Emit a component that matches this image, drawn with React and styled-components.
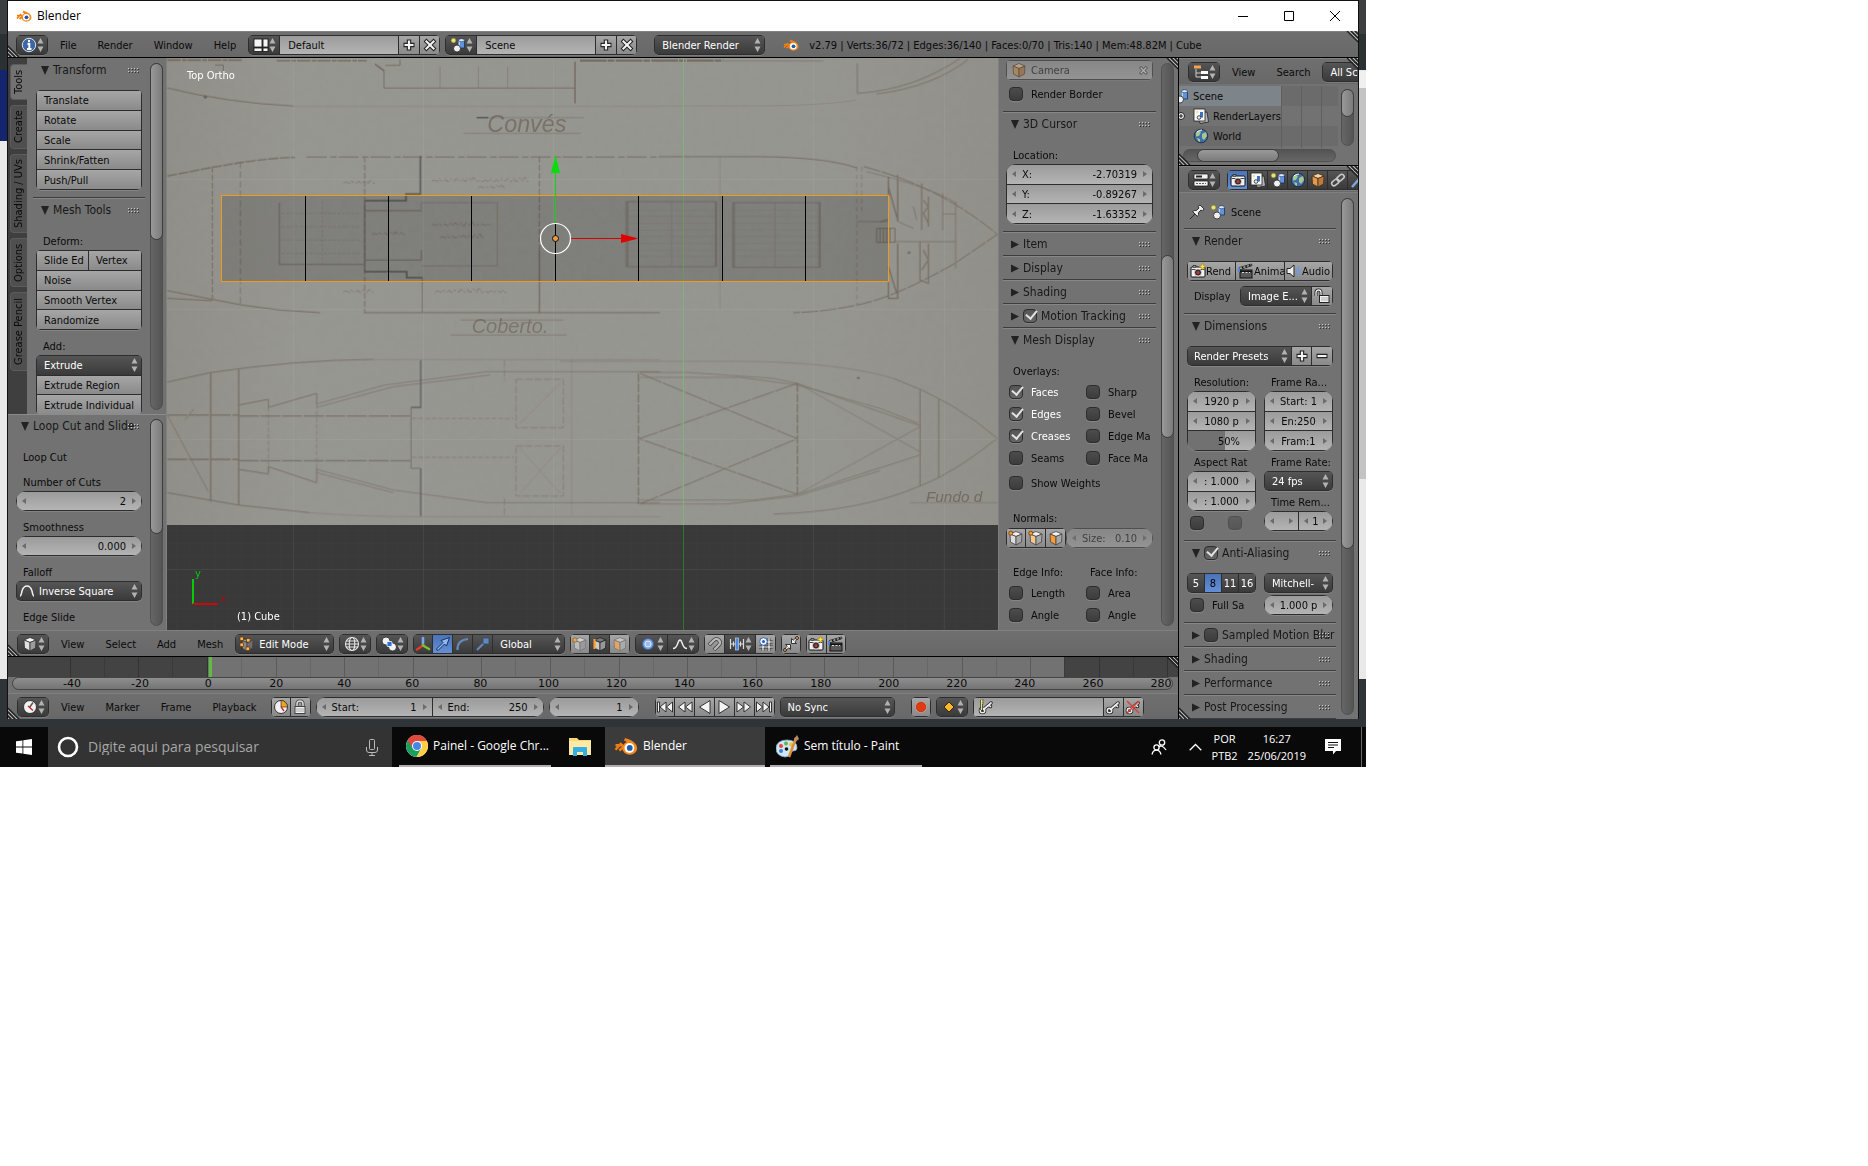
import React, { useState } from 'react';
import styled, { createGlobalStyle, css } from 'styled-components';

const uiFont = '"DejaVu Sans Condensed", "DejaVu Sans", sans-serif';
const winFont = '"Open Sans", "Noto Sans", sans-serif';
const line = '#2d2d2d';
const lightWidget = 'linear-gradient(#a6a6a6, #8a8a8a)';
const fieldWidget = 'linear-gradient(#9b9b9b, #b4b4b4)';
const darkWidget = 'linear-gradient(#555, #3a3a3a)';

const Global = createGlobalStyle`
  * { box-sizing: border-box; }
  body { margin: 0; background: #fff; font: 11px/14px ${uiFont}; color: #0a0a0a; }
  button, input, select { font: inherit; color: inherit; margin: 0; }
  button, select { border: 0; padding: 0; white-space: nowrap; }
  svg { display: block; flex: none; }
`;

/* ---------- desktop and window frame ---------- */
const Desktop = styled.div`
  width: 100%; max-width: 1366px; overflow: hidden; white-space: nowrap;
  background: linear-gradient(#3b3f42 34px, #2b3033 34px 70px, #e9e9e9 70px 679px, #2e3437 679px);
`;
const Stage = styled.div`display: flex; padding-bottom: 8px;`;
const LeftEdge = styled.div`
  flex: 0 0 7px;
  background: linear-gradient(transparent 70px, #13266d 70px 141px, transparent 141px);
`;
const RightEdge = styled.div`
  flex: 0 0 7px;
  background: linear-gradient(transparent 71px, #f0f0f0 71px 88px, #c3c3c3 88px 479px, transparent 479px);
`;
const Window = styled.main`
  flex: 1; min-width: 0; border: 1px solid #111; border-bottom: 0; background: #727272; overflow: hidden;
`;
const TitleBar = styled.header`
  height: 30px; background: #fff; display: flex; align-items: center; padding-left: 8px;
  font: 12px/16px ${winFont}; color: #000;
`;
const Caption = styled.span`flex: 1; padding-left: 5px;`;
const CaptionButton = styled.button`
  width: 46px; height: 28px; background: none; display: grid; place-items: center;
`;
const Header = styled.div`
  position: relative; display: flex; align-items: center; height: 26px;
  padding: ${p => p.$pad || '2px 0 0 9px'};
  background: linear-gradient(#808080 1px, #6f6f6f 1px, #686868);
  overflow: hidden; flex: none;
`;
const Cluster = styled.div`
  display: flex; align-items: center; gap: ${p => p.$gap ?? 5}px; margin-left: ${p => p.$ml || 0}px;
`;
const Menus = styled.nav`display: flex; gap: 21px; margin: 0 ${p => p.$mr || 12}px 0 12px;`;
const MenuItem = styled.button`background: none; padding-top: 2px;`;
const Workspace = styled.div`display: flex; border-top: 1px solid #000;`;
const MainColumn = styled.div`flex: 1; min-width: 0; border-right: 1px solid #000;`;
const SideColumn = styled.div`flex: 0 0 179px; min-width: 0; display: flex; flex-direction: column; overflow: hidden;`;
const ViewRow = styled.div`display: flex;`;

const GripSvg = styled.svg`
  position: absolute; z-index: 3; pointer-events: none;
  ${p => (p.$at === 'bl' ? css`left: 0; bottom: 0;` : css`right: 0; top: 0;`)}
`;
const Grip = ({ at }) => (
  <GripSvg $at={at} width="12" height="12" aria-hidden="true">
    <path d="M0 1L11 12M0 5L7 12M0 9L3 12" stroke="#222" strokeWidth="1.3" transform={at === 'tr' ? 'rotate(180 6 6)' : undefined} />
    <path d="M0 3L9 12M0 7L5 12M0 11L1 12" stroke="#b5b5b5" strokeWidth="1" transform={at === 'tr' ? 'rotate(180 6 6)' : undefined} />
  </GripSvg>
);

/* ---------- widgets ---------- */
const Group = styled.div`
  display: grid; gap: 1px; padding: 1px; background: ${line}; overflow: hidden; flex: none;
  border-radius: ${p => (p.$round ? 10 : 5)}px;
  height: ${p => (p.$rows || 1) * 20}px;
  width: ${p => (p.$w ? p.$w + 'px' : 'auto')};
  grid-template-columns: ${p => p.$cols || 'minmax(0, 1fr)'};
  grid-auto-rows: minmax(0, 1fr);
  box-shadow: 0 1px rgba(255, 255, 255, .13);
  opacity: ${p => (p.$off ? .5 : 1)};
`;
const Split = styled.div`display: grid; grid-template-columns: ${p => p.$cols}; gap: 1px; min-width: 0;`;
const Button = styled.button`
  display: flex; align-items: center; overflow: hidden; min-width: 0;
  justify-content: ${p => (p.$center ? 'center' : 'flex-start')};
  padding: ${p => (p.$icon ? 0 : 2)}px 0 0 ${p => (p.$center ? 0 : p.$pl ?? 7)}px;
  background: ${p => (p.$on ? 'linear-gradient(#4a73b8, #648fd6)' : p.$dark ? darkWidget : lightWidget)};
  color: ${p => (p.$on ? '#000' : p.$dark ? '#fff' : '#0a0a0a')};
`;
const IconMenu = styled.button`
  display: flex; align-items: center; justify-content: space-between; padding: 0 3px 0 4px;
  background: ${darkWidget}; min-width: 0;
`;
const SelectWrap = styled.label`
  display: flex; align-items: center; min-width: 0; background: ${darkWidget}; color: #fff;
  padding: 0 3px 0 ${p => p.$pl ?? 7}px; gap: 4px;
`;
const SelectBox = styled.select`
  appearance: none; background: none; flex: 1; min-width: 0; width: 0; height: 18px; padding-top: 2px; outline: none; color: #fff;
  overflow: hidden;
`;
const TextBox = styled.input`
  border: 0; outline: none; min-width: 0; width: 100%; padding: 2px 8px 0; background: ${fieldWidget};
`;
const NumWrap = styled.label`
  display: flex; align-items: center; min-width: 0; overflow: hidden; gap: ${p => (p.$tight ? 2 : 6)}px;
  padding: 0 ${p => (p.$fill ? 9 : 5)}px 0 5px;
  background: ${p => (p.$fill ? `linear-gradient(90deg, #717171 ${p.$fill}%, transparent ${p.$fill}%), ` : '')}${fieldWidget};
`;
const NumLabel = styled.span`padding-top: 2px;`;
const NumValue = styled.input`
  border: 0; outline: none; background: none; padding: 2px 0 0; flex: 1; min-width: 0; width: 0;
  text-align: ${p => (p.$center ? 'center' : 'right')};
`;
const Check = styled.input`
  appearance: none; width: 14px; height: 14px; border: 1px solid ${line}; border-radius: 4px; flex: none;
  background: linear-gradient(#4c4c4c, #3c3c3c); display: grid; place-items: center;
  box-shadow: 0 1px rgba(255, 255, 255, .13); opacity: ${p => (p.$off ? .5 : 1)};
  &:checked { background: linear-gradient(#555, #666); }
  &:checked::after {
    content: ''; width: 5px; height: 9px; margin: -5px 0 0 2px; transform: rotate(40deg);
    border: solid #e4e4e4; border-width: 0 2px 2px 0;
  }
`;
const CheckRow = styled.label`
  display: flex; align-items: center; gap: 8px; height: ${p => p.$h || 22}px; padding-left: 3px; min-width: 0; overflow: hidden;
  color: ${p => (p.$lit ? '#fff' : 'inherit')};
`;
const CheckText = styled.span`padding-top: 2px;`;
const Label = styled.div`height: 19px; line-height: 22px; padding-left: 7px; margin-top: ${p => p.$mt ?? 6}px; overflow: hidden;`;
const Gap = styled.div`height: ${p => p.$h || 0}px;`;
const TwoCols = styled.div`display: grid; grid-template-columns: minmax(0, 1fr) minmax(0, 1fr); column-gap: ${p => p.$gap ?? 8}px;`;

const Arrows = () => (
  <svg width="7" height="14" viewBox="0 0 7 14" aria-hidden="true">
    <path d="M3.500 0L6.500 5.500H.5ZM3.500 14L6.500 8.500H.5Z" fill="#b2b2b2" />
  </svg>
);
const Tri = ({ right }) => (
  <svg width="4" height="6" viewBox="0 0 4 6" aria-hidden="true">
    <path d={right ? 'M0 0L4 3L0 6Z' : 'M4 0L0 3L4 6Z'} fill="#6b6b6b" />
  </svg>
);
const Select = ({ value, label, pl, icon }) => (
  <SelectWrap $pl={pl}>
    {icon}
    <SelectBox aria-label={label}><option>{value}</option></SelectBox>
    <Arrows />
  </SelectWrap>
);
const Num = ({ label, value, fill, center, tight, name }) => {
  const [v, setV] = useState(value);
  return (
    <NumWrap $fill={fill} $tight={tight}>
      {!fill && <Tri />}
      {label && <NumLabel>{label}</NumLabel>}
      <NumValue aria-label={name || label} $center={center} value={v} onChange={e => setV(e.target.value)} />
      {fill ? <Gap /> : <Tri right />}
    </NumWrap>
  );
};
const Tick = ({ label, on, h, off }) => (
  <CheckRow $h={h} $lit={on}><Check type="checkbox" defaultChecked={on} $off={off} />{label && <CheckText>{label}</CheckText>}</CheckRow>
);

/* ---------- panels ---------- */
const PanelBox = styled.section`
  padding: 0; border-top: ${p => (p.$first ? 0 : 1)}px solid #3d3d3d;
  box-shadow: ${p => (p.$first ? 'none' : 'inset 0 1px #878787')};
`;
const PanelHead = styled.h2`
  margin: 0; display: flex; align-items: center; gap: 4px; height: ${p => (p.$first ? 22 : 23)}px;
  padding: ${p => (p.$first ? 0 : 1)}px 6px 0 ${p => p.$pl}px; font: 12px/16px ${uiFont}; color: #181818;
`;
const PanelTitle = styled.span`flex: 1; width: 0; white-space: nowrap;`;
const PanelBody = styled.div`padding: ${p => p.$pt ?? 10}px 3px ${p => p.$pb ?? 7}px;`;
const Dots = () => (
  <svg width="11" height="5" aria-hidden="true">
    {[0, 3, 6, 9].map(x => [0, 3].map(y => <rect key={x + '-' + y} x={x} y={y} width="1" height="1" fill="#c9c9c9" />))}
    {[0, 3, 6, 9].map(x => [1, 4].map(y => <rect key={x + '-' + y} x={x + 1} y={y} width="1" height="1" fill="#333" />))}
  </svg>
);
const Panel = ({ title, open, first, pt, pb, pl = 8, check, children }) => (
  <PanelBox $first={first}>
    <PanelHead $first={first} $pl={pl}>
      <svg width="8" height="9" aria-hidden="true"><path d={open ? 'M0 0H8L4 9Z' : 'M0 .5V8.500L8 4.500Z'} fill="#222" /></svg>
      {check !== undefined && <Check type="checkbox" aria-label={title} defaultChecked={check} />}
      <PanelTitle>{title}</PanelTitle>
      <Dots />
    </PanelHead>
    {open && children && <PanelBody $pt={pt} $pb={pb}>{children}</PanelBody>}
  </PanelBox>
);

const Track = styled.div`
  background: linear-gradient(${p => (p.$flat ? '0deg' : '90deg')}, #666, #545454); border: 1px solid #505050; border-radius: 7px;
  display: flex; flex-direction: ${p => (p.$flat ? 'row' : 'column')}; flex: none;
  ${p => (p.$flat ? css`height: 13px;` : css`width: 13px;`)}
  margin: ${p => p.$m || '5px 4px 4px 3px'};
`;
const Thumb = styled.div`
  border: 1px solid #3c3c3c; border-radius: 7px; margin: ${p => (p.$at ? p.$at : '-1px')};
  background: linear-gradient(${p => (p.$flat ? '180deg' : '90deg')}, #999, #7b7b7b);
  flex: 0 0 ${p => p.$len}px;
`;

/* ---------- icons, 16 x 16 ---------- */
const cube = (top, left, right, edge) => (
  <g stroke={edge} strokeWidth=".8" strokeLinejoin="round">
    <path d="M8 1.500L14 4L8 6.500L2 4Z" fill={top} /><path d="M2 4L8 6.500V15L2.500 12Z" fill={left} /><path d="M14 4L8 6.500V15L13.500 12Z" fill={right} />
  </g>
);
const star = (x, y) => <path transform={`translate(${x} ${y})`} d="M0 -3.500L1 -1L3.500 0L1 1L0 3.500L-1 1L-3.500 0L-1 -1Z" fill="#ffe44a" stroke="#a58a10" strokeWidth=".6" />;
const scene = (
  <g><circle cx="3.500" cy="3.500" r="2.300" fill="#e9e56a" stroke="#8f8c3a" strokeWidth=".6" />
    <path d="M8.500 3.500V11H14.500V3.500Z" fill="#5f94df" stroke="#1d2f55" strokeWidth=".8" /><path d="M8.500 4V11H10V4Z" fill="#b9d5fb" />
    <ellipse cx="11.500" cy="3.200" rx="3" ry="1.500" fill="#dce9fb" stroke="#1d2f55" strokeWidth=".6" />
    <circle cx="7" cy="11.500" r="3.500" fill="#f0f0f0" stroke="#222" strokeWidth=".8" /></g>
);
const world = (
  <g><circle cx="8" cy="8" r="6.800" fill="#3f6ea8" stroke="#1b2b40" strokeWidth=".9" /><path d="M3 4.500Q6 2 8 4L6 8L3 8.500ZM9 6L13 4L14 8L11 12L9 10ZM4 10L7 11L7 14Q4.500 13 4 10Z" fill="#a8c890" />
    <path d="M4 4Q6 2 9 2" stroke="#fff" strokeWidth="1" fill="none" /></g>
);
const camera = (
  <g><rect x="1" y="4" width="14" height="10" rx="1" fill="#f2f2f2" stroke="#111" /><path d="M3 2.500H6V4H3Z" fill="#ddd" stroke="#111" strokeWidth=".7" /><path d="M1.500 6.500H14.500" stroke="#444" />
    <circle cx="8" cy="9.500" r="3.600" fill="#333" stroke="#eee" strokeWidth=".8" /><circle cx="8" cy="9.500" r="1.500" fill="#c33" /></g>
);
const clapper = (
  <g><rect x="2" y="7" width="12" height="8" fill="#5a5a5a" stroke="#111" /><path d="M2 6.500L14 2.500L13.500 1L1.500 4.500Z" fill="#eee" stroke="#111" strokeWidth=".8" /><path d="M4 4L5.500 5.500M7.500 3L9 4.400M11 2L12.500 3.300M2 8.500H14" stroke="#111" strokeWidth="1.300" /><path d="M4 9.500H12" stroke="#ddd" strokeDasharray="2 1.500" /><path d="M1 5V9" stroke="#4a86d8" strokeWidth="2" /></g>
);
const keyShape = <g fill="none" strokeLinecap="round"><path d="M5.500 10.500L13 4M11 6L12.500 7.500" stroke="#222" strokeWidth="3.500" /><circle cx="4.500" cy="11.500" r="2.300" stroke="#222" strokeWidth="3" /><path d="M5.500 10.500L13 4M11 6L12.500 7.500" stroke="#eee" strokeWidth="1.700" /><circle cx="4.500" cy="11.500" r="2.300" stroke="#eee" strokeWidth="1.400" /></g>;
const bar = x => <rect x={x} y="3" width="2" height="10" />;
const transport = kids => <g fill="#f4f4f4" stroke="#222" strokeWidth=".9" strokeLinejoin="round">{kids}</g>;

const glyphs = {
  blender: <g><path d="M1 7.500H6M3.500 11L10 5.500L7 3.500M5 6L1 10.500" stroke="#f07d12" strokeWidth="1.700" fill="none" /><path d="M7 2.500Q15.500 5 15.500 9.500A5 4.500 0 1 1 5.500 9Q6 6 9.500 5Z" fill="#f5871f" /><circle cx="10.300" cy="9.300" r="3.300" fill="#fff" /><circle cx="10.500" cy="9.300" r="1.900" fill="#1f5ba7" /></g>,
  info: <g><circle cx="8" cy="8" r="6.700" fill="#3d66a5" stroke="#d7e2f2" strokeWidth="1" /><path d="M8 3V5.200M6.500 7H8.300V12M6 12H10.500" stroke="#fff" strokeWidth="2" fill="none" /></g>,
  layout: <g fill="#f5f5f5" stroke="#111" strokeWidth=".8"><rect x="1" y="2" width="8" height="8" /><rect x="1" y="11" width="8" height="3.500" /><rect x="10" y="2" width="5" height="8" /><rect x="10" y="11" width="5" height="3.500" /></g>,
  scene, world, camera, clapper,
  plus: <g><path d="M8 2.500V13.500M2.500 8H13.500" stroke="#222" strokeWidth="4.400" /><path d="M8 3.500V12.500M3.500 8H12.500" stroke="#f4f4f4" strokeWidth="2.200" /></g>,
  minus: <g><path d="M2.500 8H13.500" stroke="#222" strokeWidth="4.400" /><path d="M3.500 8H12.500" stroke="#f4f4f4" strokeWidth="2.200" /></g>,
  cross: <g><path d="M3 3L13 13M13 3L3 13" stroke="#222" strokeWidth="4" /><path d="M3.700 3.700L12.300 12.300M12.300 3.700L3.700 12.300" stroke="#f4f4f4" strokeWidth="2" /></g>,
  object: cube('#f7d3a4', '#dd9a55', '#bd7a3c', '#4a2f14'),
  whiteCube: cube('#fafafa', '#e2e2e2', '#9c9c9c', '#333'),
  vertexCube: <g>{cube('#cfcfcf', '#bdbdbd', '#9a9a9a', '#777')}<circle cx="3" cy="4" r="2.200" fill="#e8a45c" stroke="#7a4a15" strokeWidth=".6" /></g>,
  edgeCube: <g>{cube('#777', '#ccc', '#999', '#222')}<path d="M2.500 3V13" stroke="#ff9a2e" strokeWidth="2.200" /></g>,
  faceCube: <g>{cube('#c5c5c5', '#e2a569', '#aaa', '#777')}</g>,
  normVert: <g>{cube('#f0f0f0', '#ddd', '#a8a8a8', '#444')}<circle cx="2.800" cy="3.200" r="2" fill="#f79a35" stroke="#6b3a08" strokeWidth=".8" /></g>,
  normSplit: <g>{cube('#f0f0f0', '#f5c88f', '#a8a8a8', '#444')}<circle cx="2.800" cy="3.200" r="2" fill="#f79a35" stroke="#6b3a08" strokeWidth=".8" /></g>,
  normFace: cube('#f0f0f0', '#f79a35', '#a8a8a8', '#444'),
  outliner: <g fill="#fff"><path d="M3 5V13H8M3 9H8" stroke="#ccc" fill="none" /><rect x="1" y="1.500" width="7" height="3" fill="#f3a351" /><rect x="8" y="7" width="7" height="3" /><rect x="8" y="12" width="7" height="3" /></g>,
  layers: <g stroke="#222" strokeWidth=".8"><path d="M5 5L14 4L15.500 14L7 15.500Z" fill="#b5b5b5" /><rect x="1" y="1" width="11" height="12" fill="#f7f7f7" /><path d="M8.500 4V9.500" stroke="#3f72bd" strokeWidth="3" /><circle cx="6" cy="9.500" r="1.800" fill="#eee" /><circle cx="4" cy="4" r="1" fill="#e9e56a" stroke="none" /></g>,
  props: <g fill="#f2f2f2" stroke="#111" strokeWidth=".7"><rect x="1" y="2" width="14" height="5" rx="1" /><path d="M3 4.500H9" stroke="#222" strokeWidth="2" /><rect x="1" y="9" width="14" height="5" rx="1" /><path d="M3 11.500H13" stroke="#222" strokeDasharray="2 1" /></g>,
  link: <g fill="none" stroke="#c8c8c8" strokeWidth="1.600"><rect x="1.500" y="8" width="8" height="4.600" rx="2.300" transform="rotate(-40 5.500 10.500)" /><rect x="6.500" y="3.500" width="8" height="4.600" rx="2.300" transform="rotate(-40 10.500 5.800)" /></g>,
  wrench: <path d="M2 15L11 5Q10 2 13 1" stroke="#7da6dc" strokeWidth="2.400" fill="none" />,
  pin: <path d="M1 15L6 10L3.500 7.500Q5.500 6 7.500 6.500L10 4L9 2.500L11 1L15 5L13.500 7L12 6L9.500 8.500Q10 10.500 8.500 12.500L6 10" fill="#eee" stroke="#222" strokeWidth=".9" strokeLinejoin="round" />,
  speaker: <g><path d="M1 5.500H4L8 2V14L4 10.500H1Z" fill="#eee" stroke="#222" /><path d="M10 5Q12 8 10 11M12 3.500Q15 8 12 12.500" stroke="#6f9be0" strokeWidth="1.400" fill="none" /></g>,
  unlock: <g><path d="M2 8V4.500Q2 2 4.500 2T7 4.500V7" stroke="#222" strokeWidth="3" fill="none" /><path d="M2 8V4.500Q2 2 4.500 2T7 4.500V7" stroke="#eee" strokeWidth="1.300" fill="none" /><rect x="5.500" y="7.500" width="9.500" height="7" fill="#f2f2f2" stroke="#222" /><path d="M7 10H14M7 12H14" stroke="#aaa" /></g>,
  lock: <g><path d="M5 8V5Q5 2 8 2T11 5V8" stroke="#444" strokeWidth="3.200" fill="none" /><path d="M5 8V5Q5 2 8 2T11 5V8" stroke="#ddd" strokeWidth="1.500" fill="none" /><rect x="3" y="7.500" width="10" height="7" fill="#eee" stroke="#444" /><path d="M4 10H12M4 12H12" stroke="#aaa" /></g>,
  invSquare: <path d="M1 13Q2 13 3 8Q4.500 3 8 3T13 8Q14 13 15 13" stroke="#f2f2f2" strokeWidth="1.500" fill="none" />,
  smooth: <path d="M1 12.500Q4 12.500 5.500 8Q8 0 10.500 8Q12 12.500 15 12.500" stroke="#eee" strokeWidth="1.400" fill="none" />,
  editMode: <g>{cube('#999', '#8a8a8a', '#6f6f6f', '#444')}<path d="M3 2.500V13.500M3 3H9" stroke="#222" /><g fill="#ffb35c" stroke="#5e3205" strokeWidth=".7"><rect x="1" y="1" width="3.500" height="3.500" /><rect x="1" y="7" width="3.500" height="3.500" /><rect x="7.500" y="2.500" width="3.500" height="3.500" /><rect x="7" y="11" width="3.500" height="3.500" /></g></g>,
  shading: <g fill="none" stroke="#e8e8e8" strokeWidth="1.100"><circle cx="8" cy="8" r="6.500" fill="#444" /><ellipse cx="8" cy="8" rx="2.800" ry="6.500" /><path d="M1.500 8H14.500M2.500 5H13.500M2.500 11H13.500" /></g>,
  pivot: <g stroke="#222" strokeWidth=".8"><circle cx="5" cy="5" r="4" fill="#f2f2f2" /><circle cx="11.500" cy="11" r="4" fill="#f2f2f2" /><rect x="6" y="5.500" width="5" height="5" rx="1" fill="#2f6fd0" stroke="#fff" /></g>,
  axes: <g strokeWidth="2.600" strokeLinecap="round" fill="none"><path d="M8 9V2" stroke="#78a8ee" /><path d="M8 9.500L2 13.500" stroke="#e2372b" /><path d="M8 9.500L14 13" stroke="#7ac22b" /></g>,
  move: <path d="M2 14L1.500 13L8 6.500L6 4.500L14.500 1.500L11.500 10L9.500 8L3 14.500Z" fill="#8fb8f2" stroke="#16305a" strokeWidth="1" />,
  arc: <path d="M2.500 14Q2 4 13 3" stroke="#6288bb" strokeWidth="2.200" fill="none" />,
  scale: <g><path d="M2 14L9 7" stroke="#6288bb" strokeWidth="2.200" /><rect x="8" y="2" width="6" height="6" fill="#6288bb" stroke="#2b4468" strokeWidth=".7" /></g>,
  prop: <g><circle cx="8" cy="8" r="5.500" fill="#7fa6e2" stroke="#3c62a0" /><circle cx="8" cy="8" r="3" fill="#9bbcf0" stroke="#dce8fa" strokeWidth="1" /></g>,
  magnet: <g fill="none" transform="rotate(45 8 8)"><path d="M4.500 13V6Q4.500 2.500 8 2.500T11.500 6V13" stroke="#444" strokeWidth="3.800" /><path d="M4.500 12.500V6Q4.500 2.500 8 2.500T11.500 6V12.500" stroke="#b9b9b9" strokeWidth="2.200" /></g>,
  increment: <g><path d="M1 8H15M1.500 3V13M4.500 5.500V10.500M11.500 5.500V10.500M14.500 3V13" stroke="#ddd" strokeWidth="1.200" /><rect x="6.500" y="2" width="3" height="12" fill="#4d88df" stroke="#cfe0f7" strokeWidth=".6" /></g>,
  target: <g><path d="M1 11H15M5 4V15M11 2V15M6 6H15" stroke="#333" strokeWidth="2.800" /><path d="M1 11H15M5 4V15M11 2V15M6 6H15" stroke="#fff" strokeWidth="1.200" /><circle cx="5.500" cy="5.500" r="3.800" fill="#f2f6fc" stroke="#2f66b8" strokeWidth="1" /><circle cx="5.500" cy="5.500" r="1.600" fill="#2f66b8" /></g>,
  pack: <g fill="#f5f5f5" stroke="#222" strokeWidth=".9"><path d="M8.500 7.500V2.500L10.300 4.200L13 1.500L14.500 3L11.800 5.700L13.500 7.500Z" /><path d="M7.500 8.500V13.500L5.700 11.800L3 14.500L1.500 13L4.200 10.300L2.500 8.500Z" /><circle cx="14" cy="2" r="1.500" fill="#f5a14a" /><circle cx="2" cy="14" r="1.500" fill="#f5a14a" /></g>,
  renderNew: <g>{camera}{star(12.5, 3.5)}</g>,
  clock: <g><circle cx="8" cy="8" r="6.500" fill="#f2f2f2" stroke="#333" /><path d="M7.500 8.500L11 3.500" stroke="#555" strokeWidth="1.400" /><path d="M6 7L11 11.500" stroke="#c22" strokeWidth="1.300" /></g>,
  clockRange: <g><circle cx="8" cy="8" r="6.500" fill="#f2f2f2" stroke="#333" /><path d="M8 8V1.500A6.500 6.500 0 0 1 14.500 8Z" fill="#f3a21e" stroke="#333" strokeWidth=".7" /><path d="M8 8L11 12" stroke="#c22" strokeWidth="1.300" /></g>,
  first: transport(<>{bar(0.5)}<path d="M9 3V13L3 8ZM15.500 3V13L9.500 8Z" /></>),
  rewind: transport(<path d="M8 3V13L1.500 8ZM15 3V13L8.500 8Z" />),
  back: transport(<path d="M13 1.500V14.500L2.500 8Z" />),
  play: transport(<path d="M3 1.500V14.500L13.500 8Z" />),
  forward: transport(<path d="M8 3V13L14.500 8ZM1 3V13L7.500 8Z" />),
  last: transport(<><path d="M.5 3V13L6.500 8ZM7 3V13L13 8Z" />{bar(13.5)}</>),
  record: <g><circle cx="8" cy="8" r="5.600" fill="#f3b3a2" /><circle cx="8" cy="8" r="4.800" fill="#e23a10" stroke="#a12508" strokeWidth=".7" /></g>,
  diamond: <path d="M8 3L13 8L8 13L3 8Z" fill="#ffb92e" stroke="#3a2600" strokeWidth="1" />,
  key: keyShape,
  keyOff: <g>{keyShape}<path d="M2 2L14 14M14 2L2 14" stroke="#d8453b" strokeWidth="1.600" /></g>,
  keySet: <g>{keyShape}<path d="M3.500 1V11M3.500 2H6M3.500 4H5.500" stroke="#333" strokeWidth="2.600" /><path d="M3.500 1V11M3.500 2H6M3.500 4H5.500" stroke="#efe37a" strokeWidth="1.200" /></g>,
};
const Icon = ({ name, size = 16 }) => <svg width={size} height={size} viewBox="0 0 16 16" aria-hidden="true">{glyphs[name]}</svg>;
const IconButton = ({ name, label, ...rest }) => <Button $center $icon aria-label={label || name} {...rest}><Icon name={name} /></Button>;
const TypeMenu = ({ name, label }) => (
  <Group $w={32}><IconMenu aria-label={label}><Icon name={name} /><Arrows /></IconMenu></Group>
);

/* ---------- info header ---------- */
const DataBlock = ({ icon, value, label }) => (
  <Group $w={192} $cols="30px minmax(0, 1fr) 20px 19px">
    <IconMenu aria-label={`Browse ${label}`}><Icon name={icon} /><Arrows /></IconMenu>
    <TextBox aria-label={label} defaultValue={value} />
    <IconButton name="plus" label={`Add ${label}`} />
    <IconButton name="cross" label={`Delete ${label}`} />
  </Group>
);
const Stats = styled.span`margin-left: 10px; padding-top: 2px;`;
const InfoHeader = () => (
  <Header $pad="2px 0 0 8px">
    <Grip at="bl" /><Grip at="tr" />
    <TypeMenu name="info" label="Editor type" />
    <Menus>{['File', 'Render', 'Window', 'Help'].map(m => <MenuItem key={m}>{m}</MenuItem>)}</Menus>
    <Cluster>
      <DataBlock icon="layout" value="Default" label="Screen layout" />
      <DataBlock icon="scene" value="Scene" label="Scene" />
    </Cluster>
    <Cluster $ml={17} $gap={18}>
      <Group $w={111}><Select value="Blender Render" label="Render engine" /></Group>
      <Icon name="blender" />
    </Cluster>
    <Stats>v2.79 | Verts:36/72 | Edges:36/140 | Faces:0/70 | Tris:140 | Mem:48.82M | Cube</Stats>
  </Header>
);

/* ---------- tool shelf ---------- */
const Shelf = styled.aside`flex: 0 0 159px; min-width: 0; display: flex; flex-direction: column; border-right: 1px solid #808080;`;
const ToolRegion = styled.div`flex: 0 0 356px; display: flex; overflow: hidden;`;
const OperatorRegion = styled.div`flex: 1; display: flex; border-top: 1px solid #8b8b8b;`;
const TabStrip = styled.div`
  flex: 0 0 19px; background: #3f3f3f; padding: 6px 0 0 2px; display: flex; flex-direction: column; gap: 5px;
`;
const ShelfTab = styled.button`
  writing-mode: vertical-rl; transform: rotate(180deg); height: ${p => p.$h}px; width: 17px; flex: none;
  border-radius: 0 4px 4px 0; border: 1px solid #5c5c5c; border-left: 0; text-align: center;
  background: ${p => (p.$on ? '#727272' : '#4f4f4f')};
`;
const ShelfPanels = styled.div`flex: 1; min-width: 0; padding: ${p => p.$pt}px 1px 0 ${p => p.$pl}px;`;
const ToolShelf = () => (
  <Shelf>
    <ToolRegion>
      <TabStrip>
        <ShelfTab $on $h={36}>Tools</ShelfTab>
        <ShelfTab $h={44}>Create</ShelfTab>
        <ShelfTab $h={79}>Shading / UVs</ShelfTab>
        <ShelfTab $h={49}>Options</ShelfTab>
        <ShelfTab $h={79}>Grease Pencil</ShelfTab>
      </TabStrip>
      <ShelfPanels $pt={1} $pl={6}>
        <Panel title="Transform" open first pt={9}>
          <Group $rows={5}>
            {['Translate', 'Rotate', 'Scale', 'Shrink/Fatten', 'Push/Pull'].map(t => <Button key={t}>{t}</Button>)}
          </Group>
        </Panel>
        <Panel title="Mesh Tools" open>
          <Label $mt={0}>Deform:</Label>
          <Group $rows={4}>
            <Split $cols="51px minmax(0, 1fr)"><Button>Slide Ed</Button><Button>Vertex</Button></Split>
            {['Noise', 'Smooth Vertex', 'Randomize'].map(t => <Button key={t}>{t}</Button>)}
          </Group>
          <Label>Add:</Label>
          <Group $rows={3}>
            <Select value="Extrude" label="Extrude" />
            <Button>Extrude Region</Button>
            <Button>Extrude Individual</Button>
          </Group>
        </Panel>
      </ShelfPanels>
      <Track $m="5px 3px 4px 4px"><Thumb $len={177} /></Track>
    </ToolRegion>
    <OperatorRegion>
      <ShelfPanels $pt={0} $pl={5}>
        <Panel title="Loop Cut and Slide" open first pb={4}>
          <Label $mt={0}>Loop Cut</Label>
          <Label>Number of Cuts</Label>
          <Group $round><Num name="Number of Cuts" value="2" /></Group>
          <Label>Smoothness</Label>
          <Group $round><Num name="Smoothness" value="0.000" /></Group>
          <Label>Falloff</Label>
          <Group><Select value="Inverse Square" label="Falloff" pl={2} icon={<Icon name="invSquare" />} /></Group>
          <Label>Edge Slide</Label>
        </Panel>
      </ShelfPanels>
      <Track $m="4px 3px 4px 4px"><Thumb $len={115} /></Track>
    </OperatorRegion>
  </Shelf>
);

/* ---------- 3D viewport ---------- */
const Viewport = styled.div`
  flex: 1; min-width: 0; position: relative; overflow: hidden; background: #393939;
`;
const Scene3D = styled.svg`position: absolute; left: 0; top: 0;`;
const majors = [293, 423, 553, 813, 944];
const cuts = [305, 388, 471, 555, 638, 722, 805];
const squiggle = (x, y, w, n = 12) => {
  let d = `M${x} ${y}`;
  for (let i = 1; i <= n; i++) {
    const k = (i + (i % 2)) * 5 % 9;
    d += `q${(i % 3) * 4} ${(i % 2 ? -1 : 1) * (4 + k)} ${w / n} ${(i % 2 ? -1 : 1) * (3 + k)}`;
  }
  return d;
};
const Blueprint = () => (
  <g fill="none" stroke="#574535" strokeWidth="3">
    <g transform="translate(160 50) scale(.33333)">
      <g opacity=".5">
        <path strokeWidth="5" d="M22 30H245M350 32H620M645 42L672 62" strokeDasharray="40 4 14 3" />
        <path d="M672 60V114H1245M1245 35V160M720 28V46H676M165 45H190V75" />
        <path opacity=".5" d="M840 50V114M955 50V114M1043 50V114" />
        <path d="M22 114Q200 158 400 168" /><path opacity=".3" d="M400 169H1500" />
        <circle cx="136" cy="141" r="4" fill="#222" />
        <path d="M950 203H985" stroke="#222" strokeWidth="5" /><path opacity=".6" d="M985 203H1272M910 250H1262M872 855H1220M902 810H1210" />
      </g>
      <g opacity=".5">
        <path d="M22 378L157 352L240 338Q330 324 405 322" strokeDasharray="30 4" strokeWidth="4" />
        <path strokeDasharray="60 10 20 6" d="M440 321H1500" />
        <path d="M157 350V748M614 320V790M1138 320V600" strokeDasharray="18 6" /><path d="M1138 600V790" strokeWidth="4" />
        <path opacity=".7" d="M241 335V765" strokeDasharray="20 9" />
        <path stroke="#222" strokeWidth="5" d="M781 318V432H738V452H614M614 665H740V683H787" />
        <path d="M614 482H784M614 630H784V600M787 683V788M614 788H1500" />
        <path opacity=".5" d="M784 482V458H1012V648H787" />
        <path d="M614 455V665" stroke="#333" />
        <path d="M610 643H358V458" strokeWidth="4" opacity=".7" /><path opacity=".35" d="M487 455V643M365 490H600M365 530H600M365 570H600M365 610H600" strokeDasharray="8 6" />
        <path d="M22 722L157 748L245 765Q360 784 480 788M22 745L157 752" />
      </g>
      <g opacity=".4" strokeWidth="2.500" strokeDasharray="22 5 9 6">
        <path d={squiggle(550, 400, 95, 10)} /><path d={squiggle(815, 394, 290, 34)} /><path d={squiggle(955, 414, 80, 10)} />
        <path d={squiggle(635, 554, 100, 12)} /><path d={squiggle(815, 527, 180, 22)} /><path d={squiggle(840, 564, 130, 16)} />
        <path d={squiggle(550, 727, 90, 10)} /><path d={squiggle(825, 727, 215, 24)} />
      </g>
      <g opacity=".45">
        <path d="M22 996L150 968Q400 930 640 928" /><path opacity=".4" d="M640 929H1500M450 1388Q600 1400 780 1400H1500" />
        <path d="M22 1328L235 1365L450 1388" /><path d="M152 968V1355M236 958V1365" strokeWidth="4" />
        <path d="M236 1065L325 1048V1072L470 1030V1062M236 1258L325 1272V1250L470 1298V1255" />
        <path d="M470 1062L670 1006L980 965H1500M470 1072L700 1010L990 975M470 1258L700 1320L980 1358H1500M470 1268L700 1328" opacity=".7" />
        <path d="M22 1095H236M236 1098H755M22 1228H236M236 1232H755" strokeWidth="4" strokeDasharray="60 5" />
        <path opacity=".6" d="M755 1105H1060M755 1222H1060M325 1072V1270M470 1062V1255" strokeDasharray="14 6" />
        <path d="M782 930V1072H753M782 1255V1398" stroke="#222" strokeWidth="4" /><path d="M753 1072V1255H782" />
        <path opacity=".6" d="M1033 930V990M1033 1345V1400M1068 988H1210V1133H1068ZM1068 1188H1210V1338H1068Z" strokeDasharray="22 6" />
        <path opacity=".3" d="M1080 1120L1200 1000M1080 1195L1200 1330M1200 1195L1080 1330M1235 930V1398" />
        <path opacity=".7" d="M22 1095L145 1325M75 1110L100 1078" />
      </g>
      <g stroke="none" fill="#574535" fontFamily="Liberation Sans, sans-serif" fontStyle="italic">
        <text x="982" y="246" fontSize="70" opacity=".45">Convés</text>
        <text x="935" y="848" fontSize="60" opacity=".4">Coberto.</text>
      </g>
    </g>
    <g transform="translate(560 50) scale(.33333)">
      <g opacity=".5">
        <path strokeWidth="7" d="M60 32H490" strokeDasharray="80 3 20 4" /><path d="M490 33H790M45 35V160" opacity=".6" />
        <path d="M892 40V130Q1060 120 1200 25M950 132Q1120 110 1225 28" opacity=".8" />
        <path opacity=".3" d="M300 168H600Q800 166 890 150" />
        <path d="M300 320H600Q800 322 892 354" /><path d="M912 350Q1140 410 1312 553L1185 640Q1000 745 890 765Q800 785 700 788" strokeDasharray="50 5" />
        <path d="M920 365Q1110 410 1190 460" opacity=".6" />
        <path opacity=".6" d="M890 350V765M905 350V490" strokeDasharray="14 10" />
        <path d="M985 380V440M1013 375V515M985 695V745H1013V580M985 410L1013 510M985 650L1010 730" strokeWidth="4" />
        <path opacity=".8" d="M1085 400V540M1105 440V530M1090 450L1105 470L1090 490L1105 520M1080 575V690L1105 700V580M1090 600L1105 630L1085 660" strokeWidth="4" />
        <path d="M1060 470L1070 510M1148 430V540M1187 455V655M1148 492H1187M1000 575H1187M1015 515L1060 535M890 515H985" opacity=".7" />
        <path d="M950 535H1005V577H950ZM960 535V577M970 535V577M980 535V577M990 535V577M960 515L985 508" />
        <path opacity=".6" d="M198 455H468V650H198ZM518 458H780V652H518Z" /><path opacity=".45" strokeWidth="6" d="M203 455V650M468 455V650M522 458V652M778 458V652" />
        <path opacity=".3" d="M335 455V650M645 458V652M480 320V780" />
        {[480, 500, 520, 540, 560, 580, 600, 620].map(y => <path key={y} opacity=".12" d={`M205 ${y}H468M520 ${y}H778`} />)}
      </g>
      <g opacity=".45">
        <path opacity=".5" d="M0 934H580Q850 940 1000 985" /><path d="M1000 985Q1180 1050 1312 1165Q1180 1270 1080 1308Q900 1385 640 1392" opacity=".8" />
        <path d="M240 970L712 1166L240 1362M712 1000L238 1166L712 1333" strokeDasharray="70 4" />
        <path d="M235 970V1362M712 1000V1333" strokeDasharray="26 5" strokeWidth="4" />
        <path d="M240 967H380L640 985L712 1000L1080 1127M240 982H540L712 1005L960 1075L1075 1120M240 1350H580L712 1333L1080 1215M240 1362H500L712 1338L960 1262" opacity=".7" />
        <path opacity=".6" d="M712 1000L1080 1205M712 1333L1080 1130" />
        <path d="M1080 1020V1308M1136 1048V1283" /><circle cx="895" cy="984" r="3" fill="#333" /><circle cx="1047" cy="608" r="3" fill="#333" />
        <path opacity=".5" d="M1050 1358H1312" />
      </g>
      <text x="1098" y="1355" fontSize="46" fill="#574535" stroke="none" opacity=".5" fontFamily="Liberation Sans, sans-serif" fontStyle="italic">Fundo d</text>
    </g>
  </g>
);
const View3D = () => (
  <Viewport>
    <Scene3D width="100%" height="100%" aria-label="3D view">
      <defs>
        <linearGradient id="paper" x1="0" x2="1"><stop offset="0" stopColor="#918f89" /><stop offset=".15" stopColor="#979792" /><stop offset=".8" stopColor="#969691" /><stop offset="1" stopColor="#92908a" /></linearGradient>
        <filter id="mottle" x="0" y="0" width="100%" height="100%"><feTurbulence type="fractalNoise" baseFrequency=".12" numOctaves="3" seed="4" /><feColorMatrix values="0 0 0 0 .25  0 0 0 0 .22  0 0 0 0 .18  .5 0 0 0 -.2" /></filter>
        <pattern id="grid" width="13" height="13" patternUnits="userSpaceOnUse" x="293" y="569"><path d="M.5 0V13M0 .5H13" stroke="#3b3b3b" /></pattern>
      </defs>
      <g transform="translate(-167 -58)">
        <rect x="167" y="525" width="100%" height="105" fill="url(#grid)" />
        <svg x="167" y="58" width="100%" height="467">
          <rect width="100%" height="100%" fill="url(#paper)" />
          <rect width="100%" height="100%" filter="url(#mottle)" opacity=".3" />
          <g transform="translate(-167 -58)"><Blueprint /></g>
        </svg>
        {majors.map(x => <path key={x} d={`M${x}.5 58V630`} stroke="#fff" strokeOpacity=".05" />)}
        {[179, 309, 439, 569].map(y => <path key={y} d={`M167 ${y}.500H1200`} stroke="#fff" strokeOpacity=".05" />)}
        <path d="M683.500 58V525" stroke="#7fb377" /><path d="M683.500 525V630" stroke="#2a7a22" />
        <rect x="221.500" y="195.500" width="667" height="86" fill="#000" fillOpacity=".15" />
        {cuts.map(x => <path key={x} d={`M${x}.5 196V281`} stroke="#000" />)}
        <rect x="221.500" y="195.500" width="667" height="86" fill="none" stroke="#f39a14" />
        <path d="M555.500 223V172" stroke="#0bd80b" /><path d="M555.500 155L560 173H551Z" fill="#0bdc0b" />
        <path d="M571 238.500H622" stroke="#d80000" /><path d="M638.500 238.500L621 243V234Z" fill="#e00000" />
        <circle cx="555.500" cy="238.500" r="15" fill="none" stroke="#fff" strokeWidth="1.200" />
        <circle cx="555.500" cy="238.500" r="3" fill="#eb9a44" stroke="#111" />
        <path d="M193 579V604" stroke="#0ac80a" strokeWidth="2" /><path d="M193 604H218" stroke="#c80a0a" strokeWidth="2" />
        <text x="195" y="577" fontSize="11" fill="#0ac80a">y</text><text x="220" y="602" fontSize="11" fill="#a80f0f">x</text>
        <text x="187" y="79" fontSize="11" fill="#fff">Top Ortho</text>
        <text x="237" y="620" fontSize="11" fill="#fff">(1) Cube</text>
      </g>
    </Scene3D>
  </Viewport>
);

/* ---------- properties shelf of the viewport ---------- */
const NShelf = styled.aside`flex: 0 0 180px; min-width: 0; display: flex; position: relative; border-left: 1px solid #7f7f7f;`;
const NPanels = styled.div`flex: 1; min-width: 0; padding: 2px 2px 0 4px;`;
const CameraField = styled(Group)`margin: 0 3px;`;
const FieldWithIcon = styled.div`display: flex; align-items: center; padding: 0 3px 0 4px; background: ${fieldWidget};`;
const PlainInput = styled.input`border: 0; background: none; outline: none; flex: 1; min-width: 0; width: 0; padding: 2px 4px 0;`;
const NSpace = styled.div`padding: 4px 3px 7px;`;
const Narrow = styled.div`margin-left: ${p => p.$ml}px;`;
const PropertyShelf = () => (
  <NShelf>
    <Grip at="tr" />
    <NPanels>
      <CameraField $off>
        <FieldWithIcon><Icon name="object" /><PlainInput aria-label="Local camera" defaultValue="Camera" disabled /><Icon name="cross" size={11} /></FieldWithIcon>
      </CameraField>
      <NSpace><Tick label="Render Border" h={20} /></NSpace>
      <Panel title="3D Cursor" open>
        <Label $mt={0}>Location:</Label>
        <Group $rows={3} $round>
          <Num label="X:" value="-2.70319" /><Num label="Y:" value="-0.89267" /><Num label="Z:" value="-1.63352" />
        </Group>
      </Panel>
      <Panel title="Item" /><Panel title="Display" /><Panel title="Shading" />
      <Panel title="Motion Tracking" check />
      <Panel title="Mesh Display" open pb={4}>
        <Label $mt={0}>Overlays:</Label>
        <Gap $h={1} />
        <TwoCols $gap={7}>
          <div><Tick label="Faces" on /><Tick label="Edges" on /><Tick label="Creases" on /><Tick label="Seams" /></div>
          <div><Tick label="Sharp" /><Tick label="Bevel" /><Tick label="Edge Ma" /><Tick label="Face Ma" /></div>
        </TwoCols>
        <Gap $h={3} />
        <Tick label="Show Weights" />
        <Label $mt={14}>Normals:</Label>
        <Gap $h={1} />
        <Cluster $gap={0}>
          <Group $cols="18px 19px 19px" $w={60}>
            <IconButton name="normVert" label="Vertex normals" /><IconButton name="normSplit" label="Split normals" /><IconButton name="normFace" label="Face normals" />
          </Group>
          <Group $round $off $w={87}><Num label="Size:" value="0.10" /></Group>
        </Cluster>
        <TwoCols $gap={7}>
          <div><Label $mt={14}>Edge Info:</Label><Gap $h={1} /><Tick label="Length" /><Tick label="Angle" /></div>
          <div><Label $mt={14}>Face Info:</Label><Gap $h={1} /><Tick label="Area" /><Tick label="Angle" /></div>
        </TwoCols>
      </Panel>
    </NPanels>
    <Track><Thumb $len={183} $at="191px -1px -1px" /></Track>
  </NShelf>
);

/* ---------- viewport header ---------- */
const ViewHeader = () => (
  <Header>
    <Grip at="bl" />
    <TypeMenu name="whiteCube" label="Editor type" />
    <Menus>{['View', 'Select', 'Add', 'Mesh'].map(m => <MenuItem key={m}>{m}</MenuItem>)}</Menus>
    <Cluster>
      <Group $w={99}><Select value="Edit Mode" label="Mode" pl={3} icon={<Icon name="editMode" />} /></Group>
      <TypeMenu name="shading" label="Viewport shading" />
      <TypeMenu name="pivot" label="Pivot point" />
      <Group $w={152} $cols="18px 19px 19px 19px minmax(0, 1fr)">
        <IconButton $dark name="axes" label="Manipulator" /><IconButton $on name="move" label="Translate manipulator" />
        <IconButton $dark name="arc" label="Rotate manipulator" /><IconButton $dark name="scale" label="Scale manipulator" />
        <Select value="Global" label="Orientation" />
      </Group>
      <Group $w={60} $cols="18px 19px 19px">
        <IconButton name="vertexCube" label="Vertex select" /><IconButton $dark name="edgeCube" label="Edge select" /><IconButton name="faceCube" label="Face select" />
      </Group>
      <Group $w={64} $cols="1fr 1fr">
        <IconMenu aria-label="Proportional editing"><Icon name="prop" /><Arrows /></IconMenu>
        <IconMenu aria-label="Falloff"><Icon name="smooth" /><Arrows /></IconMenu>
      </Group>
      <Group $w={72} $cols="19px 1fr 19px">
        <IconButton name="magnet" label="Snap" />
        <IconMenu aria-label="Snap element"><Icon name="increment" /><Arrows /></IconMenu>
        <IconButton name="target" label="Snap target" />
      </Group>
      <Group $w={20}><IconButton name="pack" label="Auto merge" /></Group>
      <Group $w={40} $cols="1fr 1fr"><IconButton name="renderNew" label="Render" /><IconButton name="clapper" label="Render animation" /></Group>
    </Cluster>
  </Header>
);

/* ---------- timeline ---------- */
const TimelineBox = styled.section`position: relative; border-top: 1px solid #000; background: #727272;`;
const Ruler = styled.svg`width: 100%; height: 20px;`;
const FrameScroll = styled.div`
  margin: 0 5px 0 4px; height: 13px; border: 1px solid #444; border-radius: 7px; overflow: hidden;
  background: linear-gradient(#8e8e8e, #747474);
`;
const FrameLabels = styled.div`
  display: grid; grid-template-columns: repeat(17, minmax(0, 1fr)); margin: 0 -23px 0 25px;
  text-align: center; font: 11px/12px "DejaVu Sans", sans-serif;
`;
const marks = Array.from({ length: 17 }, (_, i) => -40 + i * 20);
const Timeline = () => (
  <TimelineBox>
    <Grip at="tr" />
    <Ruler viewBox="8 0 1170 20" preserveAspectRatio="none" aria-label="Frames">
      <rect x="8" width="1170" height="20" fill="#434343" /><rect x="207" width="857" height="20" fill="#727272" />
      {marks.map(f => { const x = Math.round(207 + f * 3.43); return <path key={f} d={`M${x}.5 0V20`} stroke={f > 0 && f < 250 ? '#5a5a5a' : '#333'} />; })}
      {marks.map(f => { const x = Math.round(241 + f * 3.43); return <path key={f} d={`M${x}.5 0V20`} stroke={f > -20 && f < 240 ? '#676767' : '#3a3a3a'} />; })}
      <rect x="209" width="3" height="20" fill="#5dbd3f" />
    </Ruler>
    <FrameScroll><FrameLabels>{marks.map(f => <span key={f}>{f}</span>)}</FrameLabels></FrameScroll>
    <Gap $h={3} />
    <Header>
      <Grip at="bl" />
      <TypeMenu name="clock" label="Editor type" />
      <Menus>{['View', 'Marker', 'Frame', 'Playback'].map(m => <MenuItem key={m}>{m}</MenuItem>)}</Menus>
      <Cluster $ml={2}>
        <Group $w={40} $cols="1fr 1fr"><IconButton name="clockRange" label="Preview range" /><IconButton name="lock" label="Lock" /></Group>
        <Group $w={228} $round $cols="115px minmax(0, 1fr)"><Num label="Start:" value="1" /><Num label="End:" value="250" /></Group>
        <Group $w={90} $round><Num name="Current frame" value="1" /></Group>
      </Cluster>
      <Cluster $ml={16}>
        <Group $w={120} $cols="repeat(6, minmax(0, 1fr))">
          {['first', 'rewind', 'back', 'play', 'forward', 'last'].map(n => <IconButton key={n} name={n} />)}
        </Group>
        <Group $w={115}><Select value="No Sync" label="Sync mode" /></Group>
      </Cluster>
      <Cluster $ml={16}>
        <Group $w={20}><IconButton name="record" label="Record" /></Group>
        <Group $w={32}><IconMenu aria-label="Keyframe type"><Icon name="diamond" /><Arrows /></IconMenu></Group>
        <Group $w={171} $cols="minmax(0, 1fr) 19px 19px">
          <FieldWithIcon><Icon name="keySet" /><PlainInput aria-label="Keying set" /></FieldWithIcon>
          <IconButton name="key" label="Insert keyframe" /><IconButton name="keyOff" label="Delete keyframe" />
        </Group>
      </Cluster>
    </Header>
  </TimelineBox>
);

/* ---------- outliner ---------- */
const OutlinerBox = styled.div`
  position: relative; height: 82px; display: grid; grid-template: minmax(0, 1fr) auto / minmax(0, 1fr) auto;
  border-bottom: 1px solid #000;
`;
const Tree = styled.ul`
  margin: 2px 0 0; padding: 0; list-style: none; overflow: hidden;
  background: linear-gradient(90deg, transparent 102px, #5f5f5f 102px 103px, transparent 103px 122px, #5f5f5f 122px 123px, transparent 123px 142px, #5f5f5f 142px 143px, transparent 143px),
    repeating-linear-gradient(#6b6b6b 0 20px, #727272 20px 40px);
`;
const TreeRow = styled.li`
  width: 102px; height: 20px; display: flex; align-items: center; gap: 4px; overflow: hidden;
  padding-left: ${p => p.$pl}px; background: ${p => (p.$on ? '#7d858a' : 'none')};
`;
const HScrollRow = styled.div`grid-column: 1 / -1;`;
const Clipped = styled.div`margin-left: -6px; display: flex;`;
const Outliner = () => (
  <>
    <Header>
      <Grip at="tr" />
      <TypeMenu name="outliner" label="Editor type" />
      <Menus $mr={12}><MenuItem>View</MenuItem><MenuItem>Search</MenuItem></Menus>
      <Group $w={111}><Select value="All Scenes" label="Display mode" /></Group>
    </Header>
    <OutlinerBox>
      <Grip at="bl" />
      <Tree>
        <TreeRow $on $pl={0}><Clipped><Icon name="scene" /></Clipped><CheckText>Scene</CheckText></TreeRow>
        <TreeRow $pl={0}>
          <svg width="10" height="16" aria-hidden="true"><circle cx="2" cy="8" r="3.500" fill="#eee" stroke="#222" /><path d="M0 8H4M2 6V10" stroke="#222" /></svg>
          <Icon name="layers" /><CheckText>RenderLayers</CheckText>
        </TreeRow>
        <TreeRow $pl={14}><Icon name="world" /><CheckText>World</CheckText></TreeRow>
      </Tree>
      <Track $m="5px 4px 2px 3px"><Thumb $len={28} /></Track>
      <HScrollRow><Track $flat $m="1px 22px 3px 4px"><Thumb $flat $len={82} $at="-1px -1px -1px 13px" /></Track></HScrollRow>
    </OutlinerBox>
  </>
);

/* ---------- properties editor ---------- */
const PropsRegion = styled.div`flex: 1 1 0; min-height: 0; display: flex; overflow: hidden; position: relative; border-top: 1px solid #7f7f7f;`;
const PropsPanels = styled.div`flex: 1; min-width: 0; padding: 9px 2px 0 5px;`;
const Context = styled.div`display: flex; align-items: center; gap: 5px; height: 20px; margin: 0 0 6px 5px;`;
const InlineRow = styled.div`display: flex; align-items: center; margin-top: ${p => p.$mt || 0}px; padding-left: ${p => p.$pl || 0}px;`;
const RowText = styled.span`flex: 1; padding-top: 2px;`;
const Properties = () => (
  <>
    <Header $pad="1px 0 0 9px">
      <Grip at="tr" />
      <TypeMenu name="props" label="Editor type" />
      <Cluster $ml={7}>
        <Group $w={161} $cols="repeat(8, 19px)">
          {['camera', 'layers', 'scene', 'world', 'object', 'link', 'wrench', 'whiteCube'].map((n, i) => <IconButton key={n} name={n} $on={i === 0} $dark={i > 0} />)}
        </Group>
      </Cluster>
    </Header>
    <PropsRegion>
      <Grip at="bl" />
      <PropsPanels>
        <Context><Icon name="pin" /><Icon name="scene" /><CheckText>Scene</CheckText></Context>
        <Panel title="Render" open pt={9}>
          <Group $cols="47px 48px minmax(0, 1fr)">
            <Button $icon $pl={2}><Icon name="renderNew" /><CheckText>Rend</CheckText></Button><Button $icon $pl={2}><Icon name="clapper" /><CheckText>Anima</CheckText></Button><Button $icon $pl={1}><Icon name="speaker" /><CheckText>Audio</CheckText></Button>
          </Group>
          <InlineRow $mt={5} $pl={7}>
            <RowText>Display</RowText>
            <Group $w={93} $cols="minmax(0, 1fr) 20px"><Select value="Image E..." label="Display" /><IconButton name="unlock" label="Lock interface" /></Group>
          </InlineRow>
        </Panel>
        <Panel title="Dimensions" open pt={9}>
          <Group $cols="minmax(0, 1fr) 19px 20px"><Select value="Render Presets" label="Render presets" pl={6} /><IconButton name="plus" label="Add preset" /><IconButton name="minus" label="Remove preset" /></Group>
          <TwoCols>
            <div>
              <Label>Resolution:</Label>
              <Group $rows={3} $round>
                <Num tight center name="Resolution X" value="1920 p" /><Num tight center name="Resolution Y" value="1080 p" /><Num fill={55} name="Resolution percentage" value="50%" />
              </Group>
              <Label $mt={1}>Aspect Rat</Label>
              <Group $rows={2} $round><Num tight center name="Aspect X" value=": 1.000" /><Num tight center name="Aspect Y" value=": 1.000" /></Group>
              <InlineRow $mt={2}><Tick h={20} /><Narrow $ml={21}><Tick h={20} off /></Narrow></InlineRow>
            </div>
            <div>
              <Label>Frame Ra...</Label>
              <Group $rows={3} $round>
                <Num tight center name="Frame start" value="Start: 1" /><Num tight center name="Frame end" value="En:250" /><Num tight center name="Frame step" value="Fram:1" />
              </Group>
              <Label $mt={1}>Frame Rate:</Label>
              <Group><Select value="24 fps" label="Frame rate" /></Group>
              <Label $mt={1}>Time Rem...</Label>
              <Group $round $cols="1fr 1fr"><Num tight center name="Remap old" value="" /><Num tight center name="Remap new" value="1" /></Group>
            </div>
          </TwoCols>
        </Panel>
        <Panel title="Anti-Aliasing" open check pt={9}>
          <TwoCols>
            <div>
              <Group $cols="repeat(4, minmax(0, 1fr))">{['5', '8', '11', '16'].map(n => <Button key={n} $center $dark $on={n === '8'}>{n}</Button>)}</Group>
              <InlineRow $mt={2}><Tick label="Full Sa" h={20} /></InlineRow>
            </div>
            <div>
              <Group><Select value="Mitchell-" label="Filter" /></Group>
              <Gap $h={2} />
              <Group $round><Num tight center name="Filter size" value="1.000 p" /></Group>
            </div>
          </TwoCols>
        </Panel>
        <Panel title="Sampled Motion Blur" check={false} /><Panel title="Shading" /><Panel title="Performance" /><Panel title="Post Processing" />
        <PanelBox />
      </PropsPanels>
      <Track $m="5px 4px 4px 3px"><Thumb $len={351} /></Track>
    </PropsRegion>
  </>
);

/* ---------- taskbar ---------- */
const Taskbar = styled.footer`
  display: flex; height: 40px; background: #090909; color: #fff; font: 12px/16px ${winFont};
`;
const StartButton = styled.button`width: 48px; background: none; display: grid; place-items: center; flex: none;`;
const SearchBox = styled.label`width: 344px; background: #333; display: flex; align-items: center; padding: 0 14px 0 9px; gap: 9px; flex: 0 1 auto;`;
const SearchInput = styled.input`
  flex: 1; min-width: 0; border: 0; background: none; outline: none; padding: 0; font-size: 14px;
  &::placeholder { color: #a6a6a6; opacity: 1; }
`;
const TaskButton = styled.button`
  width: ${p => p.$w}px; display: flex; align-items: center; gap: 5px; padding-left: ${p => p.$pl || 7}px; flex: none;
  margin-left: ${p => p.$ml || 0}px; color: #fff; background: ${p => (p.$on ? '#3b3b3b' : 'none')};
  border-bottom: 2px solid ${p => (p.$bare ? 'transparent' : '#b3adb0')};
`;
const Tray = styled.div`display: flex; align-items: center; margin-left: auto; padding-right: 4px;`;
const TrayText = styled.div`text-align: center; line-height: 17px; font-size: 11px; margin-left: ${p => p.$ml}px;`;
const TrayButton = styled.button`background: none; margin-left: ${p => p.$ml || 0}px;`;
const ShowDesktop = styled.div`align-self: stretch; width: 1px; background: #666; margin-left: 20px;`;
const TaskbarArea = () => (
  <Taskbar>
    <StartButton aria-label="Start">
      <svg width="16" height="16"><path d="M0 2.300L6.500 1.400V7.600H0ZM7.300 1.300L16 0V7.600H7.300ZM0 8.400H6.500V14.600L0 13.700ZM7.300 8.400H16V16L7.300 14.700Z" fill="#fff" /></svg>
    </StartButton>
    <SearchBox>
      <svg width="22" height="22"><circle cx="11" cy="11" r="9" fill="none" stroke="#fff" strokeWidth="2.600" /></svg>
      <SearchInput aria-label="Search" placeholder="Digite aqui para pesquisar" />
      <svg width="12" height="17" fill="none" stroke="#bbb"><rect x="3.500" y=".5" width="5" height="10" rx="1" /><path d="M.5 8V11Q.5 13.500 3 13.500H9Q11.500 13.500 11.500 11V8M6 13.500V16.500M3 16.500H9" /></svg>
    </SearchBox>
    <TaskButton $w={152} $ml={7}>
      <svg width="22" height="22" viewBox="0 0 22 22"><circle cx="11" cy="11" r="11" fill="#fff" /><path d="M11 11L1.500 5.500A11 11 0 0 1 20.500 5.500Z" fill="#dd4b3e" /><path d="M11 11L1.500 5.500A11 11 0 0 0 10.500 22L15.300 13.500Z" fill="#1c9f5c" /><path d="M11 6H20.800A11 11 0 0 1 10.500 22L15.500 13Z" fill="#ffce43" /><path d="M1.500 5.500A11 11 0 0 1 20.800 6H11L7 13Z" fill="#dd4b3e" /><circle cx="11" cy="11" r="5" fill="#fff" /><circle cx="11" cy="11" r="4" fill="#4a86e8" /></svg>
      Painel - Google Chr...
    </TaskButton>
    <TaskButton $w={54} $bare $pl={18} aria-label="Explorer">
      <svg width="22" height="19"><path d="M0 1H8L10 3H22V18H0Z" fill="#f8d775" /><path d="M0 4H22V18H0Z" fill="#ffe9a6" /><path d="M4 19V11Q4 10 5 10H17Q18 10 18 11V19H14V15H8V19Z" fill="#35aee2" /></svg>
    </TaskButton>
    <TaskButton $w={160} $on $pl={9}><Icon name="blender" size={24} />Blender</TaskButton>
    <TaskButton $w={152} $ml={5} $pl={6}>
      <svg width="23" height="23"><path d="M11 5Q21 5 21 13Q21 16 17 16Q14 16 14 19Q13 22 9 22Q0 21 0 13Q1 5 11 5Z" fill="#cfe6f5" stroke="#7fa8c4" strokeWidth=".8" /><circle cx="5" cy="11" r="2" fill="#e3483b" /><circle cx="10" cy="8.500" r="2" fill="#5fb845" /><circle cx="15" cy="9.500" r="2" fill="#f3c033" /><circle cx="5" cy="16" r="2" fill="#3e7fd0" /><circle cx="10.500" cy="14" r="1.800" fill="#111" /><path d="M20 3L13 22" stroke="#d98f3d" strokeWidth="2.600" /><path d="M18 4L21 0L23 4L19.500 7Z" fill="#b98a66" /></svg>
      Sem título - Paint
    </TaskButton>
    <Tray>
      <TrayButton aria-label="People">
        <svg width="16" height="16" fill="none" stroke="#fff" strokeWidth="1.300"><circle cx="11" cy="3.500" r="2.700" /><path d="M7.500 8Q11 5 15 11" /><circle cx="5.500" cy="8.500" r="2.600" /><path d="M1 15.500Q2 11 5.500 11.200T10 15.500" /></svg>
      </TrayButton>
      <TrayButton $ml={22} aria-label="Show hidden icons"><svg width="13" height="8"><path d="M.7 7.300L6.500 1.500L12.300 7.300" stroke="#fff" strokeWidth="1.300" fill="none" /></svg></TrayButton>
      <TrayText $ml={10}>POR<br />PTB2</TrayText>
      <TrayText $ml={10}>16:27<br />25/06/2019</TrayText>
      <TrayButton $ml={19} aria-label="Notifications"><svg width="16" height="16"><path d="M0 0H16V12H11L8 15.500V12H0Z" fill="#fff" /><path d="M3 3.500H13M3 6H13M3 8.500H9" stroke="#111" /></svg></TrayButton>
      <ShowDesktop />
    </Tray>
  </Taskbar>
);

export default function App() {
  return (
    <Desktop>
      <Global />
      <Stage>
        <LeftEdge />
        <Window>
          <TitleBar>
            <Icon name="blender" /><Caption>Blender</Caption>
            <CaptionButton aria-label="Minimize"><svg width="10" height="10"><path d="M0 5.500H10" stroke="#000" /></svg></CaptionButton>
            <CaptionButton aria-label="Maximize"><svg width="10" height="10"><path d="M.5 .5H9.500V9.500H.5Z" stroke="#000" fill="none" /></svg></CaptionButton>
            <CaptionButton aria-label="Close"><svg width="10" height="10"><path d="M0 0L10 10M10 0L0 10" stroke="#000" /></svg></CaptionButton>
          </TitleBar>
          <InfoHeader />
          <Workspace>
            <MainColumn>
              <ViewRow><ToolShelf /><View3D /><PropertyShelf /></ViewRow>
              <ViewHeader />
              <Timeline />
            </MainColumn>
            <SideColumn><Outliner /><Properties /></SideColumn>
          </Workspace>
        </Window>
        <RightEdge />
      </Stage>
      <TaskbarArea />
    </Desktop>
  );
}
